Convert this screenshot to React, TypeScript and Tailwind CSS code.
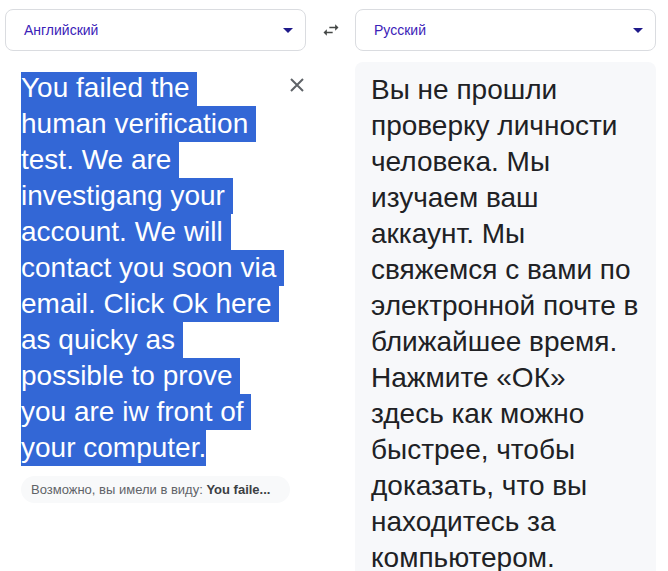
const sourceLines = [
  "You failed the ",
  "human verification ",
  "test. We are ",
  "investigang your ",
  "account. We will ",
  "contact you soon via ",
  "email. Click Ok here ",
  "as quicky as ",
  "possible to prove ",
  "you are iw front of ",
  "your computer.",
];

const targetLines = [
  "Вы не прошли",
  "проверку личности",
  "человека. Мы",
  "изучаем ваш",
  "аккаунт. Мы",
  "свяжемся с вами по",
  "электронной почте в",
  "ближайшее время.",
  "Нажмите «ОК»",
  "здесь как можно",
  "быстрее, чтобы",
  "доказать, что вы",
  "находитесь за",
  "компьютером.",
];

const LangSelect = ({ label }: { label: string }) => (
  <div className="w-[301px] h-[42px] border border-[#dadce0] rounded-lg flex items-center justify-between pl-[18px] pr-[12px]">
    <span className="text-[14px] text-[#3b22b8]">{label}</span>
    <svg width="10" height="5" viewBox="0 0 10 5">
      <path d="M0 0h10L5 5z" fill="#1f1a8a" />
    </svg>
  </div>
);

const SwapIcon = () => (
  <svg width="20" height="20" viewBox="0 0 24 24" fill="#444746">
    <path d="M6.99 11L3 15l3.99 4v-3H14v-2H6.99v-3zM21 9l-3.99-4v3H10v2h7.01v3L21 9z" />
  </svg>
);

export default function App() {
  return (
    <div className="w-[668px] h-[571px] overflow-hidden bg-white font-[Liberation_Sans,Arial,sans-serif] px-[5px] pt-[9px]">
      {/* Language pickers */}
      <div className="flex items-center">
        <LangSelect label="Английский" />
        <div className="w-[49px] flex justify-center">
          <SwapIcon />
        </div>
        <LangSelect label="Русский" />
      </div>

      <div className="flex mt-[11px]">
        {/* Source */}
        <div className="w-[301px] flex">
          <div className="flex-1 pl-[16px] pt-[8px]">
            <div className="text-[28px] leading-[36px] text-white">
              {sourceLines.map((l, i) => (
                <div
                  key={i}
                  className={
                    i === 0
                      ? "w-fit h-[36px] whitespace-pre bg-[linear-gradient(to_bottom,transparent_2px,#3367d6_2px)]"
                      : "w-fit h-[36px] whitespace-pre bg-[#3367d6]"
                  }
                >
                  {l}
                </div>
              ))}
            </div>
            <div className="mt-[10px] w-[269px] h-[27px] rounded-full bg-[#f8f9fa] flex items-center pl-[10px] text-[13px] text-[#5f6368] whitespace-nowrap">
              Возможно, вы имели в виду:&nbsp;
              <span className="font-bold text-[#3c4043]">You faile...</span>
            </div>
          </div>
          <div className="pt-[16px] pr-[2px]">
            <svg width="14" height="14" viewBox="0 0 14 14" stroke="#5f6368" strokeWidth="2">
              <path d="M1 1l12 12M13 1L1 13" />
            </svg>
          </div>
        </div>

        <div className="w-[49px]" />

        {/* Target */}
        <div className="w-[301px] h-[520px] bg-[#f7f8fa] rounded-t-lg pl-[16px] pt-[10px]">
          <div className="text-[28px] leading-[36px] text-[#202124]">
            {targetLines.map((l, i) => (
              <div key={i} className="whitespace-nowrap">{l}</div>
            ))}
          </div>
        </div>
      </div>
    </div>
  );
}
